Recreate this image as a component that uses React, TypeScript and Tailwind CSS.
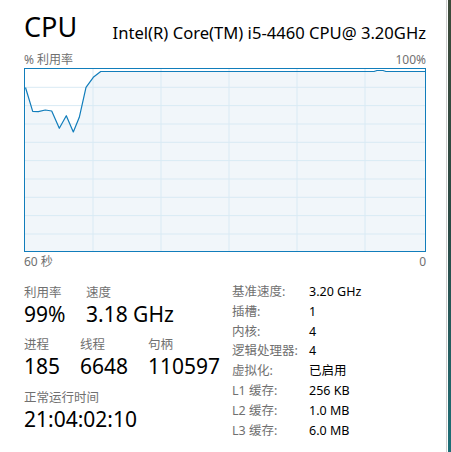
const pts: [number, number][] = [
  [0.5, 18.5], [7.7, 42.3], [13.3, 42.7], [20.3, 41], [26.7, 42], [34.3, 59.3],
  [41.3, 46.7], [48.3, 63], [54.3, 48.3], [61, 18.3], [68.3, 8.3], [75.7, 2.5],
  [349, 2.5], [352, 1.5], [358, 1.5], [361, 2.5], [401, 2.5],
];

function Chart() {
  const w = 400;
  const h = 182;
  const line = pts.map(([x, y]) => `${x},${y}`).join(" ");
  const area = `0,${h} ${line} ${w},${h}`;
  const vx = [68, 136, 204, 272, 340];
  const hy = [18.3, 36.6, 55, 73.3, 91.6, 110, 128.3, 146.6, 165];
  return (
    <div className="border border-[#117dbb] bg-white">
      <svg width={w} height={h} viewBox={`0 0 ${w} ${h}`} className="block">
        <polygon points={area} fill="#f1f6fa" />
        {hy.map((y) => (
          <line key={y} x1={0} x2={w} y1={y} y2={y} stroke="#d9eaf4" strokeWidth={1} />
        ))}
        {vx.map((x) => (
          <line key={x} x1={x} x2={x} y1={0} y2={h} stroke="#d9eaf4" strokeWidth={1} />
        ))}
        <polyline points={line} fill="none" stroke="#117dbb" strokeWidth={1.2} strokeLinejoin="round" />
      </svg>
    </div>
  );
}

function Stat({ label, value, className }: { label: string; value: string; className?: string }) {
  return (
    <div className={className}>
      <div className="text-[12.5px] leading-[16px] text-[#707070]">{label}</div>
      <div className="text-[21px] leading-[26px] text-black">{value}</div>
    </div>
  );
}

const specs: [string, string][] = [
  ["基准速度:", "3.20 GHz"],
  ["插槽:", "1"],
  ["内核:", "4"],
  ["逻辑处理器:", "4"],
  ["虚拟化:", "已启用"],
  ["L1 缓存:", "256 KB"],
  ["L2 缓存:", "1.0 MB"],
  ["L3 缓存:", "6.0 MB"],
];

export default function App() {
  return (
    <div
      className="flex h-[452px] w-[451px] overflow-hidden bg-white"
      style={{ fontFamily: '"Noto Sans", "Noto Sans CJK SC", sans-serif' }}
    >
      <div className="w-[446px] shrink-0 pl-6 pr-[20px] pt-[9px]">
        <div className="flex items-end justify-between">
          <span className="text-[27px] leading-[36px] text-black">CPU</span>
          <span className="pb-[1px] text-[16.6px] leading-[22px] text-black">
            Intel(R) Core(TM) i5-4460 CPU@ 3.20GHz
          </span>
        </div>
        <div className="mt-[7px] flex justify-between text-[12px] leading-[16px] text-[#707070]">
          <span>% 利用率</span>
          <span>100%</span>
        </div>
        <div className="mt-0 w-[402px]">
          <Chart />
        </div>
        <div className="mt-[2px] flex justify-between text-[12px] leading-[16px] text-[#707070]">
          <span>60 秒</span>
          <span>0</span>
        </div>

        <div className="mt-[15px] flex">
          <div className="w-[208px]">
            <div className="flex">
              <Stat label="利用率" value="99%" className="w-[62px]" />
              <Stat label="速度" value="3.18 GHz" />
            </div>
            <div className="mt-[10px] flex">
              <Stat label="进程" value="185" className="w-[56px]" />
              <Stat label="线程" value="6648" className="w-[68px]" />
              <Stat label="句柄" value="110597" />
            </div>
            <Stat label="正常运行时间" value="21:04:02:10" className="mt-[11px]" />
          </div>
          <div className="-mt-[3px] grid grid-cols-[77px_auto] text-[12.5px] leading-[19.8px]">
            {specs.map(([k, v]) => (
              <div key={k} className="contents">
                <span className="text-[#707070]">{k}</span>
                <span className="text-black">{v}</span>
              </div>
            ))}
          </div>
        </div>
      </div>
      <div className="w-px shrink-0 bg-[#cfcfcf]" />
      <div className="w-px shrink-0 bg-white" />
      <div className="flex-1 bg-gradient-to-b from-[#3d4a3a] via-[#2a4a45] to-[#1c6f78]" />
    </div>
  );
}
